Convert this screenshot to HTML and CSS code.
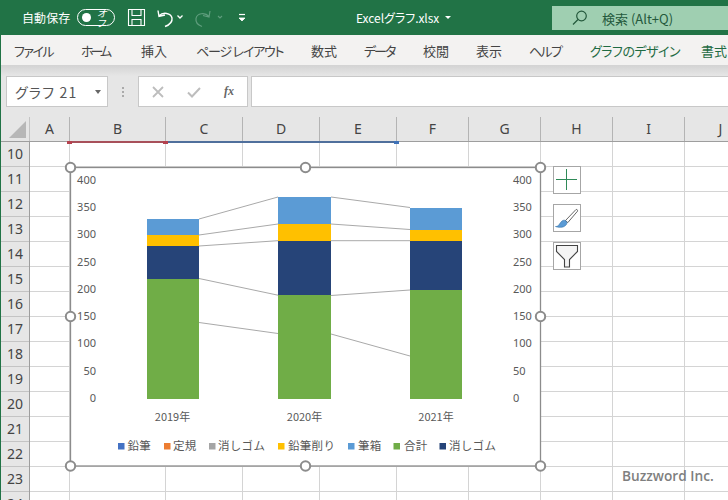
FILE: index.html
```html
<!DOCTYPE html>
<html lang="ja">
<head>
<meta charset="utf-8">
<title>Excelグラフ.xlsx</title>
<link rel="stylesheet" href="styles.css">
</head>
<body>
<div class="app">
  <header class="titlebar">
    <span class="autosave">自動保存</span>
    <span class="toggle"><span class="knob"></span><span class="toggle-text">オフ</span></span>
    <svg class="qat" width="136" height="22" viewBox="0 0 136 22" fill="none" stroke="#fff">
      <path d="M1.500 2.500H17.500V18.500H1.500Z M5 2.500V8.500H14V2.500 M5 18.500V12.500H14V18.500" stroke-width="1.100"/>
      <path d="M31 3.500L32 9.500L38 8 M32 9C36 4.500 44 6 45 11C45.600 15 42 18 38 19.500" stroke-width="1.400"/>
      <path d="M50.500 8.500L53 11L55.500 8.500" stroke-width="1.300"/>
      <path d="M83 4L82 10L76 8.500 M82 9.500C78 5 70 6 69 11.500C68.500 15 71 18 75 19.500" stroke="#5f9d7d" stroke-width="1.200"/>
      <path d="M91 9L93 11L95 9" stroke="#5f9d7d" stroke-width="1.100"/>
      <path d="M112 7.500H118" stroke-width="1.200"/>
      <path d="M112 11L115 14L118 11Z" fill="#fff" stroke-width=".8"/>
    </svg>
    <span class="filename">Excelグラフ.xlsx</span>
    <span class="filecaret"></span>
    <div class="search">
      <svg class="search-icon" width="16" height="16" viewBox="0 0 16 16" fill="none" stroke="#24593c" stroke-width="1.200"><circle cx="9.500" cy="6" r="4.800"/><path d="M6 9.500L1 14.500"/></svg>
      <span class="search-text">検索 (Alt+Q)</span>
    </div>
  </header>

  <nav class="tabs">
    <span class="tab ls15">ファイル</span>
    <span class="tab ls30">ホーム</span>
    <span class="tab">挿入</span>
    <span class="tab ls12">ページ レイアウト</span>
    <span class="tab">数式</span>
    <span class="tab ls20">データ</span>
    <span class="tab">校閲</span>
    <span class="tab">表示</span>
    <span class="tab ls17">ヘルプ</span>
    <span class="tab tab-green ls05">グラフのデザイン</span>
    <span class="tab tab-green">書式</span>
  </nav>

  <section class="formula">
    <div class="namebox"><span class="namebox-text">グラフ 21</span><span class="namebox-caret"></span></div>
    <div class="grip"><i></i><i></i><i></i></div>
    <div class="fx-buttons">
      <svg width="14" height="14" viewBox="0 0 14 14" fill="none" stroke="#bdbdbd" stroke-width="1.800"><path d="M2 2L12 12M12 2L2 12"/></svg>
      <svg width="14" height="14" viewBox="0 0 14 14" fill="none" stroke="#bdbdbd" stroke-width="2"><path d="M1 7.500L5 11.500L13 3"/></svg>
      <span class="fx">fx</span>
    </div>
    <div class="input"></div>
  </section>

  <section class="sheet">
    <div class="colhead">
      <div class="corner"><svg width="18" height="18" viewBox="0 0 18 18"><path d="M17 0V17H0Z" fill="#b7b7b7"/></svg></div>
      <div class="ch w40">A</div>
      <div class="ch w96">B</div>
      <div class="ch w77">C</div>
      <div class="ch w77">D</div>
      <div class="ch w77">E</div>
      <div class="ch w72">F</div>
      <div class="ch w72">G</div>
      <div class="ch w72">H</div>
      <div class="ch w72">I</div>
      <div class="ch w72">J</div>
      <span class="mark red-line"></span>
      <span class="mark red-a"></span>
      <span class="mark red-b"></span>
      <span class="mark blue-line"></span>
      <span class="mark blue-a"></span>
    </div>
    <div class="body">
      <div class="rowheads">
        <div class="rh">10</div><div class="rh">11</div><div class="rh">12</div><div class="rh">13</div><div class="rh">14</div>
        <div class="rh">15</div><div class="rh">16</div><div class="rh">17</div><div class="rh">18</div><div class="rh">19</div>
        <div class="rh">20</div><div class="rh">21</div><div class="rh">22</div><div class="rh">23</div><div class="rh">24</div>
      </div>
      <div class="cells">
        <div class="col w40"></div><div class="col w96"></div><div class="col w77"></div><div class="col w77"></div><div class="col w77"></div>
        <div class="col w72"></div><div class="col w72"></div><div class="col w72"></div><div class="col w72"></div><div class="col w72"></div>
      </div>
    </div>
  </section>

  <svg class="chart" width="483" height="311" viewBox="64 161 483 311">
    <rect class="frame" x="70.500" y="167.500" width="470" height="298.500"/>
    <g class="axis">
      <text x="96" y="184">400</text><text x="96" y="211">350</text><text x="96" y="238">300</text><text x="96" y="266">250</text><text x="96" y="293">200</text><text x="96" y="320">150</text><text x="96" y="347">100</text><text x="96" y="375">50</text><text x="96" y="402">0</text>
    </g>
    <g class="axis axis-right">
      <text x="513" y="184">400</text><text x="513" y="211">350</text><text x="513" y="238">300</text><text x="513" y="266">250</text><text x="513" y="293">200</text><text x="513" y="320">150</text><text x="513" y="347">100</text><text x="513" y="375">50</text><text x="513" y="402">0</text>
    </g>
    <g class="series">
      <path d="M199 219L278 197M199 235L278 224M199 246L278 240.700M199 278.500L278 295.200M199 322.500L278 333.500"/>
      <path d="M331 197L410 207.500M331 224L410 229.500M331 240.700L410 240.700M331 295.500L410 290M331 334L410 356"/>
    </g>
    <rect class="c-blue" x="147" y="219" width="52" height="16"/>
    <rect class="c-yellow" x="147" y="235" width="52" height="11"/>
    <rect class="c-navy" x="147" y="246" width="52" height="33"/>
    <rect class="c-green" x="147" y="279" width="52" height="120"/>
    <rect class="c-blue" x="278" y="197" width="53" height="27"/>
    <rect class="c-yellow" x="278" y="224" width="53" height="17"/>
    <rect class="c-navy" x="278" y="241" width="53" height="54"/>
    <rect class="c-green" x="278" y="295" width="53" height="104"/>
    <rect class="c-blue" x="410" y="208" width="52" height="22"/>
    <rect class="c-yellow" x="410" y="230" width="52" height="11"/>
    <rect class="c-navy" x="410" y="241" width="52" height="49"/>
    <rect class="c-green" x="410" y="290" width="52" height="109"/>
    <g class="cat">
      <text x="172.500" y="421">2019年</text><text x="304.500" y="421">2020年</text><text x="436" y="421">2021年</text>
    </g>
    <g class="legend">
      <rect x="118" y="443" width="6.500" height="6.500" fill="#4472c4"/><text x="127.500" y="450">鉛筆</text>
      <rect x="164" y="443" width="6.500" height="6.500" fill="#ed7d31"/><text x="173" y="450">定規</text>
      <rect x="209" y="443" width="6.500" height="6.500" fill="#a5a5a5"/><text x="218" y="450">消しゴム</text>
      <rect x="278" y="443" width="6.500" height="6.500" fill="#ffc000"/><text x="288" y="450">鉛筆削り</text>
      <rect x="348" y="443" width="6.500" height="6.500" fill="#5b9bd5"/><text x="358" y="450">筆箱</text>
      <rect x="393.500" y="443" width="6.500" height="6.500" fill="#70ad47"/><text x="404" y="450">合計</text>
      <rect x="439.500" y="443" width="6.500" height="6.500" fill="#264478"/><text x="449" y="450">消しゴム</text>
    </g>
    <g class="handles">
      <circle cx="70.500" cy="167.500" r="4.700"/><circle cx="305.500" cy="167.500" r="4.700"/><circle cx="540.500" cy="167.500" r="4.700"/>
      <circle cx="70.500" cy="316.500" r="4.700"/><circle cx="540.500" cy="316.500" r="4.700"/>
      <circle cx="70.500" cy="466" r="4.700"/><circle cx="305.500" cy="466" r="4.700"/><circle cx="540.500" cy="466" r="4.700"/>
    </g>
  </svg>

  <div class="chart-tools">
    <div class="tool"><svg width="26" height="26" viewBox="0 0 26 26" fill="none" stroke="#2f8a58"><path d="M12.500 2V23M2 12.500H23"/></svg></div>
    <div class="tool"><svg width="26" height="26" viewBox="0 0 26 26"><path d="M22 4.500L11.500 15.500L13.800 17.600L23.500 6.200C23.800 5 23 4.200 22 4.500Z" fill="#fff" stroke="#555" stroke-width=".9"/><path d="M1.500 21.500C5 21.800 5.500 18 8 16C9.500 14.800 11 15 12 16C13.500 17.500 13 19 11.500 20.500C9 23 4 22.500 1.500 21.500Z" fill="#5b9bd5" stroke="#2f6fa8" stroke-width=".6"/></svg></div>
    <div class="tool"><svg width="26" height="26" viewBox="0 0 26 26"><path d="M2.500 2.500H23.500V8.500L15.500 16.500V24H10.500V16.500L2.500 8.500Z" fill="#f4f4f4" stroke="#444" stroke-width="1.100"/></svg></div>
  </div>

  <span class="watermark">Buzzword Inc.</span>
</div>
</body>
</html>
```
FILE: styles.css
```css
* { box-sizing: border-box; }
html, body { margin: 0; padding: 0; }
body { width: 728px; height: 500px; overflow: hidden; background: #fff; font-family: "Noto Sans CJK JP", "Noto Sans", sans-serif; }
.app { position: relative; width: 728px; height: 500px; overflow: hidden; border-left: 1px solid #217346; display: flex; flex-direction: column; font-feature-settings: "palt"; }

.titlebar { flex: 0 0 35px; background: #217346; display: flex; align-items: center; color: #fff; font-size: 12px; margin-left: -1px; }
.autosave { margin-left: 22px; letter-spacing: .1px; width: 49px; white-space: nowrap; }
.toggle { width: 38px; height: 17px; margin-left: 6px; border: 1.300px solid #fff; border-radius: 9px; display: flex; align-items: center; padding-left: 4px; }
.knob { width: 9px; height: 9px; border-radius: 50%; background: #fff; }
.toggle-text { font-size: 10px; margin-left: 6px; line-height: 1; font-style: italic; }
.qat { margin-left: 12px; flex: none; }
.filename { margin-left: 93px; width: 85px; white-space: nowrap; font-size: 12px; letter-spacing: -.05px; }
.filecaret { width: 0; height: 0; border: 3px solid transparent; border-top: 3px solid #fff; border-bottom: 0; margin-left: 4px; }
.search { margin-left: auto; width: 176px; height: 24px; background: #9fcfb1; display: flex; align-items: center; margin-bottom: -1px; color: #24593c; }
.search-icon { margin-left: 20px; flex: none; }
.search-text { margin-left: 14px; font-size: 13px; white-space: nowrap; }

.tabs { flex: 0 0 30px; background: #f3f2f1; display: grid; grid-template-columns: 67px 60px 55px 115px 53px 59px 53px 53px 61px 111px 27px; align-items: center; padding-left: 13px; font-size: 13px; color: #444; white-space: nowrap; }
.tab-green { color: #1f6b43; }
.ls05 { letter-spacing: -.5px; }
.ls12 { letter-spacing: -1.200px; }
.ls15 { letter-spacing: -1.500px; }
.ls17 { letter-spacing: -1.700px; }
.ls20 { letter-spacing: -2px; }
.ls30 { letter-spacing: -3px; }

.formula { flex: 0 0 52px; background: linear-gradient(#d3d3d3, #e6e6e6 11px); display: flex; align-items: flex-start; padding: 11px 0 0 5px; }
.namebox { width: 102px; height: 31px; background: #fff; border: 1px solid #c8c8c8; display: flex; align-items: center; padding-left: 8px; font-size: 14px; color: #555; }
.namebox-text { letter-spacing: 1.200px; white-space: nowrap; flex: 1; }
.namebox-caret { width: 0; height: 0; border: 3.500px solid transparent; border-top: 4px solid #666; border-bottom: 0; margin-right: 6px; }
.grip { width: 30px; height: 31px; display: flex; flex-direction: column; align-items: center; justify-content: center; gap: 2px; }
.grip i { width: 2px; height: 2px; background: #aaa; }
.fx-buttons { width: 110px; height: 31px; background: #fff; border: 1px solid #c8c8c8; display: flex; align-items: center; padding-left: 12px; gap: 22px; }
.fx { font-family: "Liberation Serif", serif; font-style: italic; font-weight: 700; font-size: 12px; color: #666; margin-left: 1px; }
.input { flex: 1; height: 31px; margin-left: 3px; background: #fff; border: 1px solid #c8c8c8; border-right: 0; }

.sheet { flex: 1; display: flex; flex-direction: column; min-height: 0; }
.colhead { position: relative; flex: 0 0 25px; background: #e6e6e6; border-bottom: 1px solid #9e9e9e; display: flex; }
.corner { flex: 0 0 29px; border-right: 1px solid #c4c4c4; padding: 4px 0 0 8px; }
.corner svg { display: block; }
.ch { flex: none; border-right: 1px solid #b4b4b4; display: flex; align-items: center; justify-content: center; font-family: "Noto Sans", sans-serif; font-size: 14px; color: #444; line-height: 1; }
.w40 { width: 40px; flex: none; }
.w96 { width: 96px; flex: none; }
.w77 { width: 77px; flex: none; }
.w72 { width: 72px; flex: none; }
.mark { position: absolute; }
.red-line { left: 71px; width: 92px; top: 24px; height: 2px; background: #a8505a; }
.red-a, .red-b { top: 24px; width: 5px; height: 3px; background: #b5424f; }
.red-a { left: 66px; }
.red-b { left: 162px; }
.blue-line { left: 167px; width: 228px; top: 24px; height: 2px; background: #4f6f9c; }
.blue-a { left: 393px; top: 24px; width: 5px; height: 3px; background: #3f72b8; }

.body { flex: 1; display: flex; min-height: 0; }
.rowheads { flex: 0 0 29px; background: #e6e6e6; border-right: 1px solid #9e9e9e; }
.rh { height: 25px; border-bottom: 1px solid #c4c4c4; display: flex; align-items: center; justify-content: center; font-family: "Noto Sans", sans-serif; font-size: 14px; color: #444; line-height: 1; }
.cells { flex: 1; display: flex; background: repeating-linear-gradient(#fff 0, #fff 24px, #d4d4d4 24px, #d4d4d4 25px); }
.col { border-right: 1px solid #d4d4d4; }

.chart { position: absolute; left: 63px; top: 161px; display: block; }
.frame { fill: #fff; stroke: #8c8c8c; stroke-width: 1.300; }
.axis text { font-family: "Noto Sans", sans-serif; font-size: 11px; fill: #595959; text-anchor: end; }
.axis-right text { text-anchor: start; }
.series path { fill: none; stroke: #a9a9a9; stroke-width: 1; }
.c-blue { fill: #5b9bd5; }
.c-yellow { fill: #ffc000; }
.c-navy { fill: #264478; }
.c-green { fill: #70ad47; }
.cat text { font-family: "Noto Sans CJK JP", sans-serif; font-size: 11px; fill: #595959; text-anchor: middle; }
.legend text { font-family: "Noto Sans CJK JP", sans-serif; font-size: 11.500px; fill: #595959; letter-spacing: .3px; font-feature-settings: normal; }
.handles circle { fill: #fff; stroke: #8c8c8c; stroke-width: 2; }

.chart-tools { position: absolute; left: 552px; top: 166px; display: flex; flex-direction: column; gap: 10px; }
.tool { width: 28px; height: 28px; background: #fff; border: 1px solid #a6a6a6; }
.tool svg { display: block; }

.watermark { position: absolute; left: 621px; top: 466px; font-family: "Open Sans", sans-serif; font-weight: 600; font-size: 13.700px; color: #7f7f7f; white-space: nowrap; line-height: 20px; }
```
